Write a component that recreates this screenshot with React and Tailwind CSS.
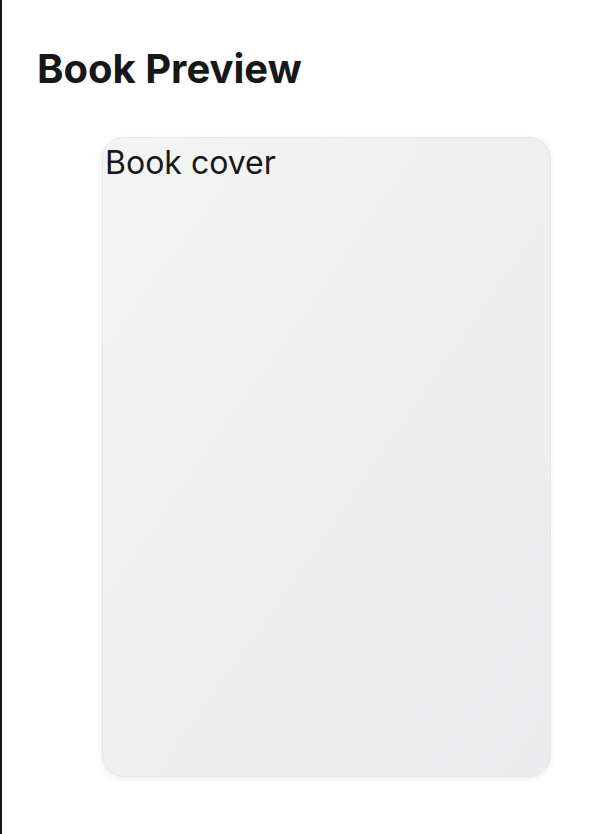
export default function App() {
  return (
    <div className="min-h-[834px] w-[608px] bg-white border-l-2 border-[#0e1712]" style={{ fontFamily: 'Inter, "Noto Sans", sans-serif' }}>
      <div className="pl-[35px] pt-[45px]">
        <h1 className="text-[40px] leading-[48px] font-bold text-[#17171a]">Book Preview</h1>
      </div>
      <div className="pl-[100px] pt-[44px]">
        <div className="w-[449px] h-[640px] rounded-[22px] border border-[#e6e6e8] bg-gradient-to-br from-[#f4f4f5] to-[#ebebed] shadow-[0_2px_6px_rgba(0,0,0,0.08)] overflow-visible">
          <div className="pl-[2px] pt-[6px] text-[32px] leading-[38px] text-[#17171a]">Book cover</div>
        </div>
      </div>
    </div>
  );
}
